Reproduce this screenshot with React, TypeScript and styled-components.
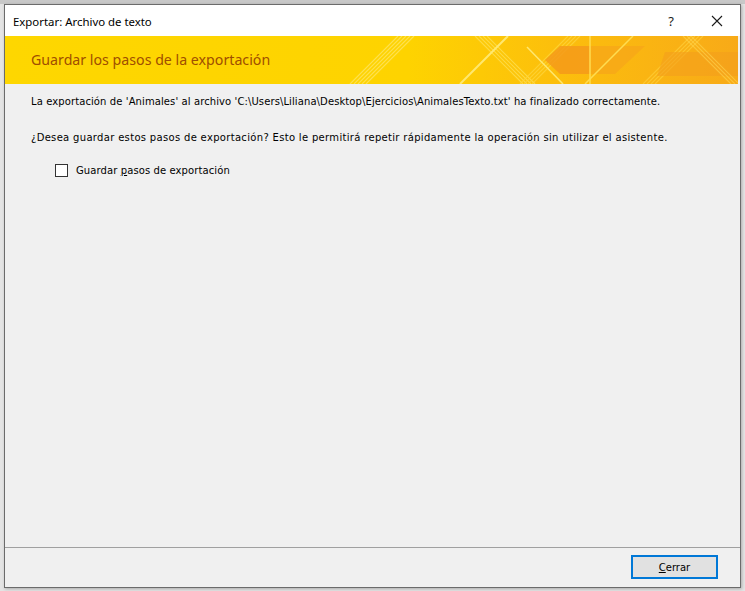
import styled, { createGlobalStyle } from 'styled-components';

const GlobalStyle = createGlobalStyle`
  html, body {
    margin: 0;
    padding: 0;
    background: #dcdcdc;
  }
  #root {
    width: 745px;
    height: 591px;
    overflow: hidden;
  }
`;

const uiFont = `"Noto Sans", "Open Sans", "DejaVu Sans", sans-serif`;
const bodyFont = `"DejaVu Sans", "Liberation Sans", sans-serif`;

const Banner = () => (
  <BannerBox>
    <BannerArt viewBox="0 0 733 48" preserveAspectRatio="none">
      <defs>
        <linearGradient id="bannerFill" x1="0" x2="1" y1="0" y2="0">
          <stop offset="0" stopColor="#fed700" />
          <stop offset="0.55" stopColor="#fed300" />
          <stop offset="0.75" stopColor="#fcbf0c" />
          <stop offset="1" stopColor="#f8aa18" />
        </linearGradient>
      </defs>
      <rect width="733" height="48" fill="url(#bannerFill)" />
      {/* diagonal hatching */}
      {[0, 4, 8, 12, 16].map((d) => (
        <line key={`a${d}`} x1={345 + d} y1="48" x2={393 + d} y2="0" stroke="#ffe560" strokeWidth="1.2" opacity="0.8" />
      ))}
      {[0, 4, 8, 12].map((d) => (
        <line key={`b${d}`} x1={470 + d} y1="0" x2={518 + d} y2="48" stroke="#ffe35a" strokeWidth="1.2" opacity="0.7" />
      ))}
      {[0, 4, 8, 12].map((d) => (
        <line key={`c${d}`} x1={515 + d} y1="48" x2={563 + d} y2="0" stroke="#ffd640" strokeWidth="1.2" opacity="0.7" />
      ))}
      <line x1="455" y1="48" x2="503" y2="0" stroke="#ffe870" strokeWidth="2" />
      <line x1="522" y1="11" x2="558" y2="48" stroke="#ffe870" strokeWidth="1.5" />
      {/* left-pointing arrow */}
      <polygon points="555,10 585,10 585,38 555,38 540,24" fill="#f59a1a" opacity="0.85" />
      <polygon points="585,10 640,10 610,38 585,38" fill="#f7a718" opacity="0.8" />
      <line x1="585" y1="0" x2="585" y2="48" stroke="#ffdc50" strokeWidth="1.5" />
      <line x1="580" y1="48" x2="628" y2="0" stroke="#ffdc50" strokeWidth="1.5" />
      {[0, 4, 8, 12].map((d) => (
        <line key={`d${d}`} x1={638 + d} y1="48" x2={686 + d} y2="0" stroke="#ffcf3a" strokeWidth="1.2" opacity="0.7" />
      ))}
      <polygon points="660,16 733,16 733,40 652,40" fill="#f49f1c" opacity="0.6" />
      {[0, 4, 8].map((d) => (
        <line key={`e${d}`} x1={678 + d} y1="0" x2={726 + d} y2="48" stroke="#ffd550" strokeWidth="1.2" opacity="0.6" />
      ))}
    </BannerArt>
    <Heading>Guardar los pasos de la exportación</Heading>
  </BannerBox>
);

const CloseIcon = () => (
  <svg width="12" height="12" viewBox="0 0 12 12">
    <path d="M1 1 L11 11 M11 1 L1 11" stroke="#1a1a1a" strokeWidth="1.1" />
  </svg>
);

export default function App() {
  return (
    <>
      <GlobalStyle />
      <Desk>
        <Dialog>
          <TitleBar>
            <Title>Exportar: Archivo de texto</Title>
            <TitleButtons>
              <TitleButton>?</TitleButton>
              <TitleButton>
                <CloseIcon />
              </TitleButton>
            </TitleButtons>
          </TitleBar>
          <Banner />
          <Content>
            <Message $spacing={0.1}>
              La exportación de 'Animales' al archivo 'C:\Users\Liliana\Desktop\Ejercicios\AnimalesTexto.txt' ha
              finalizado correctamente.
            </Message>
            <Message $spacing={0.32}>
              ¿Desea guardar estos pasos de exportación? Esto le permitirá repetir rápidamente la operación sin utilizar
              el asistente.
            </Message>
            <CheckRow>
              <CheckBox />
              <span>
                Guardar <u>p</u>asos de exportación
              </span>
            </CheckRow>
          </Content>
          <Footer>
            <Button>
              <u>C</u>errar
            </Button>
          </Footer>
        </Dialog>
      </Desk>
    </>
  );
}

const Desk = styled.div`
  width: 745px;
  height: 591px;
  padding: 4px 0 0 4px;
  box-sizing: border-box;
  background: linear-gradient(#c8c8c8 0 4px, #e4e4e4 4px);
`;

const Dialog = styled.div`
  width: 737px;
  height: 584px;
  box-sizing: border-box;
  border: 1px solid #6b6b6b;
  background: #f0f0f0;
  display: flex;
  flex-direction: column;
  box-shadow: 1px 1px 3px rgba(0, 0, 0, 0.25);
`;

const TitleBar = styled.div`
  height: 31px;
  background: #ffffff;
  display: flex;
  align-items: center;
  justify-content: space-between;
  padding-left: 8px;
  flex-shrink: 0;
`;

const Title = styled.div`
  font-family: ${uiFont};
  font-size: 11.4px;
  color: #000;
  margin-top: 1px;
`;

const TitleButtons = styled.div`
  display: flex;
  height: 100%;
`;

const TitleButton = styled.div`
  width: 46px;
  height: 100%;
  display: flex;
  align-items: center;
  justify-content: center;
  font-family: ${uiFont};
  font-size: 13px;
  color: #1a1a1a;
`;

const BannerBox = styled.div`
  position: relative;
  height: 48px;
  margin: 0 2px 0 0;
  display: flex;
  align-items: center;
  padding-left: 26px;
  overflow: hidden;
  flex-shrink: 0;
`;

const BannerArt = styled.svg`
  position: absolute;
  inset: 0;
  width: 100%;
  height: 100%;
`;

const Heading = styled.div`
  position: relative;
  font-family: ${uiFont};
  font-size: 14.2px;
  color: #a04e00;
  margin-top: -2px;
`;

const Content = styled.div`
  flex: 1;
  padding: 11px 0 0 26px;
  display: flex;
  flex-direction: column;
`;

const Message = styled.div<{ $spacing: number }>`
  font-family: ${bodyFont};
  font-size: 10px;
  letter-spacing: ${(p) => p.$spacing}px;
  color: #000;
  line-height: 13px;
  margin-bottom: 23px;
  white-space: nowrap;
`;

const CheckRow = styled.label`
  display: flex;
  align-items: center;
  gap: 8px;
  margin-left: 24px;
  margin-top: -3px;
  font-family: ${bodyFont};
  font-size: 10px;
  letter-spacing: 0.1px;
  color: #000;
`;

const CheckBox = styled.span`
  width: 11px;
  height: 11px;
  border: 1px solid #333;
  background: #fff;
`;

const Footer = styled.div`
  height: 40px;
  box-sizing: border-box;
  border-top: 1px solid #a0a0a0;
  display: flex;
  justify-content: flex-end;
  align-items: flex-start;
  padding: 7px 22px 0 0;
  flex-shrink: 0;
`;

const Button = styled.div`
  width: 87px;
  height: 24px;
  box-sizing: border-box;
  border: 2px solid #0078d7;
  background: #e1e1e1;
  display: flex;
  align-items: center;
  justify-content: center;
  font-family: ${bodyFont};
  font-size: 10px;
  color: #000;
`;
